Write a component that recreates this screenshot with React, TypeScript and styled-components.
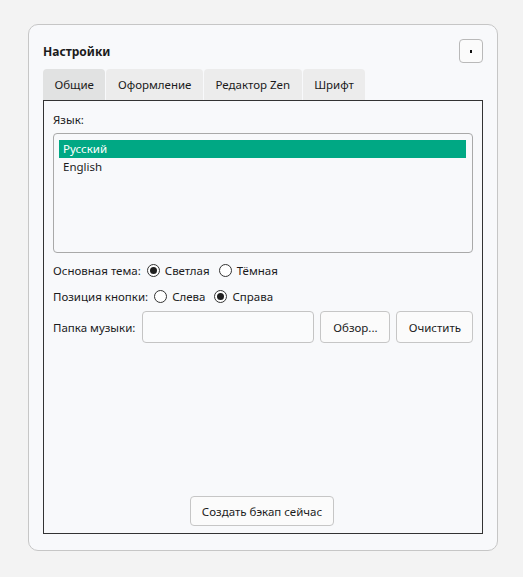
import React, { useState } from "react";
import styled, { createGlobalStyle } from "styled-components";

const GlobalStyle = createGlobalStyle`
  html, body {
    margin: 0;
    padding: 0;
    background: #f3f3f3;
    font-family: "Noto Sans", "Open Sans", sans-serif;
    font-size: 11.5px;
    color: #1b1b1b;
  }
  * { box-sizing: border-box; }
`;

const Card = styled.div`
  margin: 24px 0 0 28px;
  width: 470px;
  height: 527px;
  background: #f8f9fb;
  border: 1px solid #c6c6c6;
  border-radius: 10px;
  padding: 14px 14px 16px 14px;
  display: flex;
  flex-direction: column;
`;

const Header = styled.div`
  display: flex;
  align-items: center;
  justify-content: space-between;
  height: 24px;
  margin-bottom: 6px;
`;

const Title = styled.div`
  font-weight: 700;
  font-size: 12px;
`;

const CloseButton = styled.button`
  width: 24px;
  height: 24px;
  border: 1px solid #b9b9b9;
  border-radius: 4px;
  background: #fbfbfb;
  padding: 0;
  display: flex;
  align-items: center;
  justify-content: center;
`;

const Dot = styled.span`
  width: 2px;
  height: 3px;
  background: #111;
`;

const TabBar = styled.div`
  display: flex;
  gap: 1px;
  height: 31px;
`;

const Tab = styled.div<{ $active?: boolean }>`
  padding: 0 11.5px;
  display: flex;
  align-items: center;
  background: ${({ $active }) => ($active ? "#e1e2e2" : "#ececec")};
  border-radius: 4px 4px 0 0;
  cursor: pointer;
  white-space: nowrap;
`;

const Panel = styled.div`
  flex: 1;
  border: 1px solid #333;
  padding: 10px 9px 7px 9px;
  display: flex;
  flex-direction: column;
`;

const FieldLabel = styled.div`
  height: 18px;
  line-height: 18px;
  margin-bottom: 4px;
`;

const ListBox = styled.div`
  height: 120px;
  border: 1px solid #a9a9a9;
  border-radius: 4px;
  padding: 6px 6px 6px 5px;
  background: #f8f9fb;
`;

const ListRow = styled.div<{ $selected?: boolean }>`
  height: 18px;
  line-height: 18px;
  padding-left: 4px;
  background: ${({ $selected }) => ($selected ? "#00a884" : "transparent")};
  color: ${({ $selected }) => ($selected ? "#ffffff" : "#1b1b1b")};
`;

const Row = styled.div<{ $gap?: number; $height?: number }>`
  display: flex;
  align-items: center;
  height: ${({ $height }) => $height ?? 20}px;
  margin-top: ${({ $gap }) => $gap ?? 6}px;
  gap: 6px;
  white-space: nowrap;
`;

const RowLabel = styled.span`
  flex-shrink: 0;
`;

const RadioOption = styled.label`
  display: flex;
  align-items: center;
  gap: 5px;
  margin-right: 3px;
  cursor: pointer;
`;

const RadioCircle = styled.span<{ $checked?: boolean }>`
  width: 13px;
  height: 13px;
  border: 1px solid #333;
  border-radius: 50%;
  background: #fff;
  display: flex;
  align-items: center;
  justify-content: center;

  &::after {
    content: "";
    width: 7px;
    height: 7px;
    border-radius: 50%;
    background: ${({ $checked }) => ($checked ? "#1f1f1f" : "transparent")};
  }
`;

const TextInput = styled.input`
  width: 172px;
  flex-shrink: 0;
  height: 32px;
  border: 1px solid #c4c4c4;
  border-radius: 4px;
  background: #fafbfc;
  font: inherit;
  padding: 0 8px;
  margin-left: 1px;
`;

const Button = styled.button<{ $width: number; $height?: number }>`
  width: ${({ $width }) => $width}px;
  height: ${({ $height }) => $height ?? 32}px;
  flex-shrink: 0;
  border: 1px solid #c6c6c6;
  border-radius: 4px;
  background: #fbfbfb;
  font: inherit;
  color: #1b1b1b;
  padding: 0;
`;

const Spacer = styled.div`
  flex: 1;
`;

const Footer = styled.div`
  display: flex;
  justify-content: center;
  padding-right: 2px;
`;

const Radio: React.FC<{ label: string; checked: boolean; onSelect: () => void }> = ({
  label,
  checked,
  onSelect,
}) => (
  <RadioOption onClick={onSelect}>
    <RadioCircle $checked={checked} />
    {label}
  </RadioOption>
);

const tabs = ["Общие", "Оформление", "Редактор Zen", "Шрифт"];
const languages = ["Русский", "English"];

export default function App() {
  const [tab, setTab] = useState(0);
  const [lang, setLang] = useState(0);
  const [theme, setTheme] = useState("light");
  const [side, setSide] = useState("right");

  return (
    <>
      <GlobalStyle />
      <Card>
        <Header>
          <Title>Настройки</Title>
          <CloseButton>
            <Dot />
          </CloseButton>
        </Header>
        <TabBar>
          {tabs.map((t, i) => (
            <Tab key={t} $active={i === tab} onClick={() => setTab(i)}>
              {t}
            </Tab>
          ))}
        </TabBar>
        <Panel>
          <FieldLabel>Язык:</FieldLabel>
          <ListBox>
            {languages.map((l, i) => (
              <ListRow key={l} $selected={i === lang} onClick={() => setLang(i)}>
                {l}
              </ListRow>
            ))}
          </ListBox>
          <Row $gap={7}>
            <RowLabel>Основная тема:</RowLabel>
            <Radio label="Светлая" checked={theme === "light"} onSelect={() => setTheme("light")} />
            <Radio label="Тёмная" checked={theme === "dark"} onSelect={() => setTheme("dark")} />
          </Row>
          <Row>
            <RowLabel>Позиция кнопки:</RowLabel>
            <Radio label="Слева" checked={side === "left"} onSelect={() => setSide("left")} />
            <Radio label="Справа" checked={side === "right"} onSelect={() => setSide("right")} />
          </Row>
          <Row $gap={5} $height={32}>
            <RowLabel>Папка музыки:</RowLabel>
            <TextInput />
            <Button $width={70}>Обзор...</Button>
            <Button $width={77}>Очистить</Button>
          </Row>
          <Spacer />
          <Footer>
            <Button $width={144} $height={30}>
              Создать бэкап сейчас
            </Button>
          </Footer>
        </Panel>
      </Card>
    </>
  );
}
